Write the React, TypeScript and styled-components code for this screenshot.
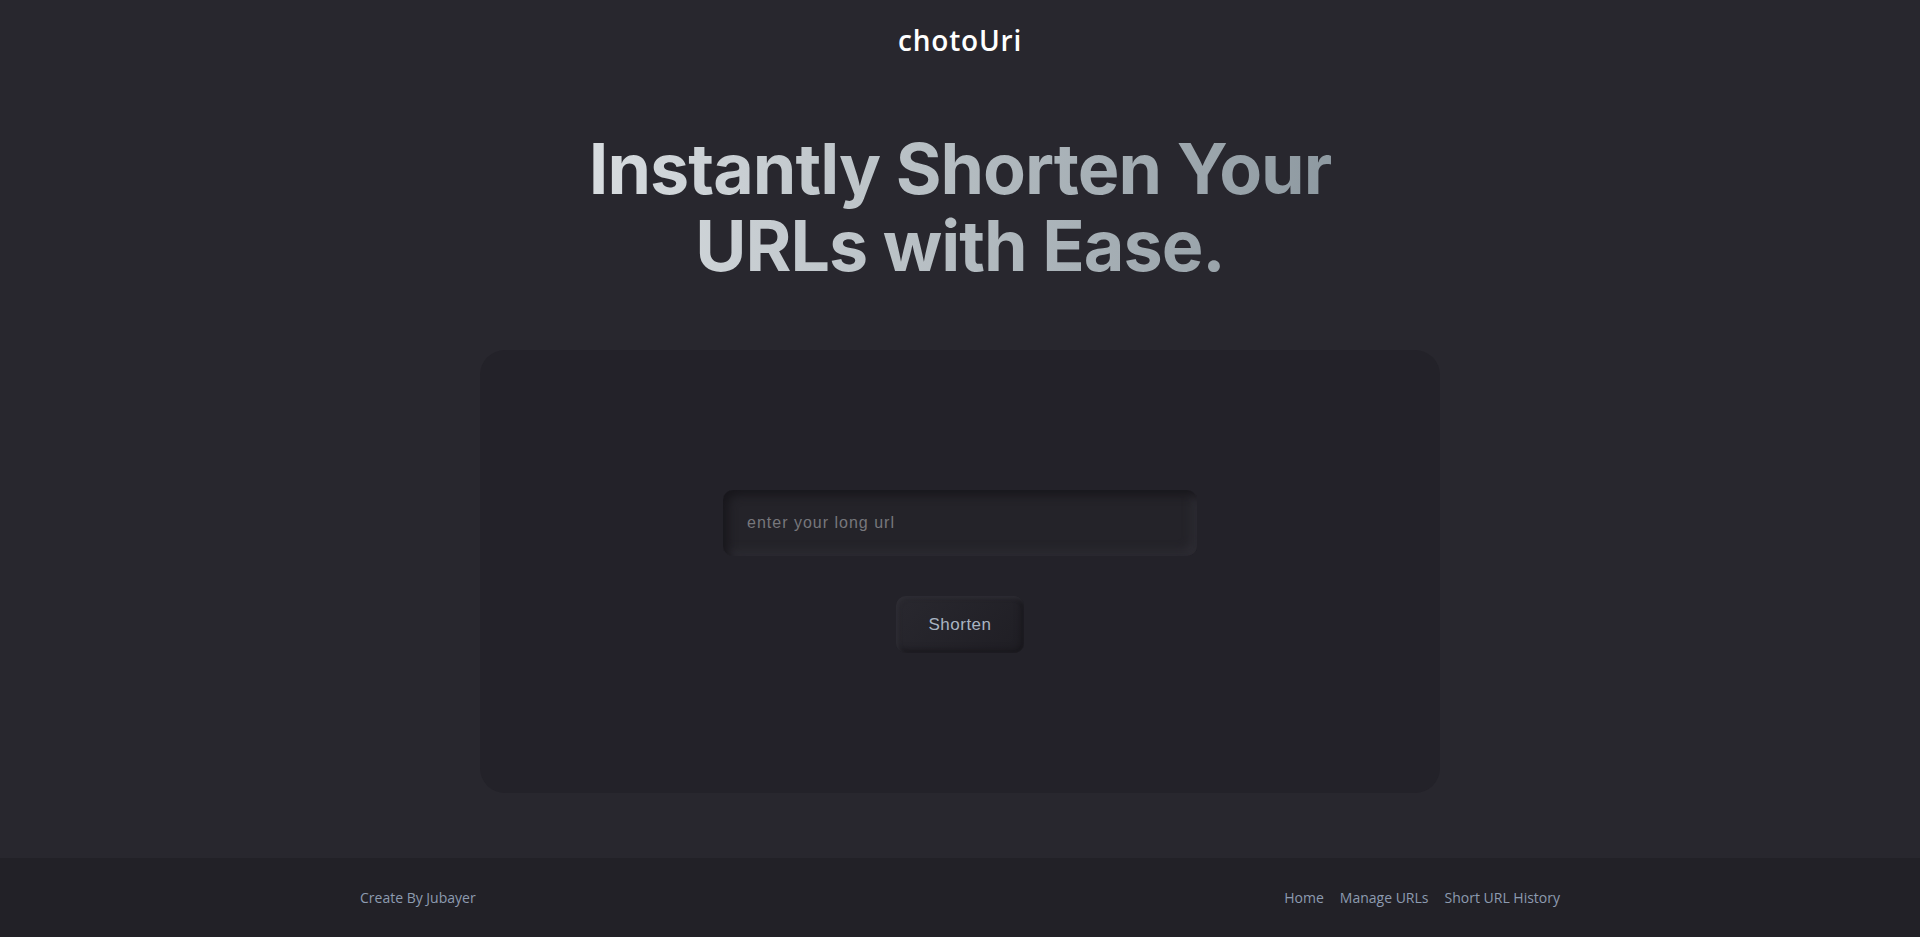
import React from "react";
import styled, { createGlobalStyle } from "styled-components";

const GlobalStyle = createGlobalStyle`
  html, body {
    margin: 0;
    padding: 0;
    background: #28272e;
  }
  * { box-sizing: border-box; }
`;

const Page = styled.div`
  min-height: 100vh;
  display: flex;
  flex-direction: column;
  background: #28272e;
`;

const Header = styled.header`
  height: 80px;
  display: flex;
  align-items: center;
  justify-content: center;
`;

const Logo = styled.div`
  font-family: "Open Sans", "Noto Sans", sans-serif;
  font-weight: 600;
  font-size: 28px;
  color: #ffffff;
  letter-spacing: 0.8px;
`;

const Main = styled.main`
  display: flex;
  flex-direction: column;
  align-items: center;
  padding-top: 50px;
  padding-bottom: 65px;
`;

const Title = styled.h1`
  margin: 0;
  font-family: Inter, "Open Sans", sans-serif;
  font-weight: 700;
  font-size: 70px;
  line-height: 77px;
  text-align: center;
  letter-spacing: -1px;
  background: linear-gradient(90deg, #dfe3e6 0%, #b4bcc1 50%, #86929a 100%);
  -webkit-background-clip: text;
  background-clip: text;
  color: transparent;
  width: 900px;
`;

const Card = styled.section`
  margin-top: 66px;
  width: 960px;
  height: 443px;
  border-radius: 25px;
  background: #232229;
  display: flex;
  flex-direction: column;
  align-items: center;
  justify-content: center;
  gap: 40px;
`;

const UrlInput = styled.input`
  width: 474px;
  height: 66px;
  border: none;
  outline: none;
  border-radius: 10px;
  background: #242329;
  padding: 0 24px;
  font-family: "Liberation Sans", Arial, sans-serif;
  font-size: 16px;
  letter-spacing: 1px;
  color: #c8cbd0;
  box-shadow: inset 5px 5px 10px #18171c, inset -5px -5px 10px #2e2d34;
  &::placeholder {
    color: #77777c;
  }
`;

const ShortenButton = styled.button`
  width: 128px;
  height: 57px;
  border: none;
  border-radius: 10px;
  background: linear-gradient(135deg, #29282f 0%, #1f1e24 100%);
  box-shadow: inset 2px 2px 4px #2f2e35, inset -3px -3px 6px #19181d;
  font-family: "Liberation Sans", Arial, sans-serif;
  font-size: 17px;
  letter-spacing: 0.5px;
  color: #a9b4c2;
  cursor: pointer;
`;

const Footer = styled.footer`
  margin-top: auto;
  background: #222127;
  height: 79px;
  display: flex;
  justify-content: center;
  padding-top: 30px;
`;

const FooterInner = styled.div`
  width: 1200px;
  display: flex;
  justify-content: space-between;
  align-items: flex-start;
`;

const FooterText = styled.span`
  font-family: "Open Sans", "Noto Sans", sans-serif;
  font-size: 14px;
  color: #8d9bb0;
`;

const FooterNav = styled.nav`
  display: flex;
  gap: 16px;
`;

const FooterLink = styled.a`
  font-family: "Open Sans", "Noto Sans", sans-serif;
  font-size: 14px;
  color: #8d9bb0;
  text-decoration: none;
`;

export default function App() {
  return (
    <>
      <GlobalStyle />
      <Page>
        <Header>
          <Logo>chotoUri</Logo>
        </Header>
        <Main>
          <Title>
            Instantly Shorten Your
            <br />
            URLs with Ease.
          </Title>
          <Card>
            <UrlInput placeholder="enter your long url" />
            <ShortenButton>Shorten</ShortenButton>
          </Card>
        </Main>
        <Footer>
          <FooterInner>
            <FooterText>Create By Jubayer</FooterText>
            <FooterNav>
              <FooterLink href="#">Home</FooterLink>
              <FooterLink href="#">Manage URLs</FooterLink>
              <FooterLink href="#">Short URL History</FooterLink>
            </FooterNav>
          </FooterInner>
        </Footer>
      </Page>
    </>
  );
}
